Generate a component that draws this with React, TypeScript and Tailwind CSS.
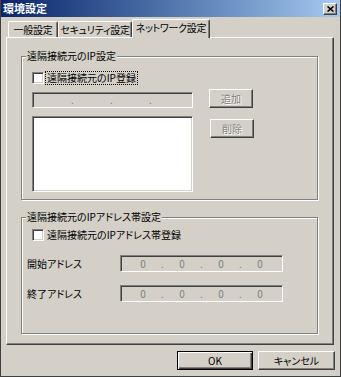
import type { ReactNode } from 'react'

const FONT = "font-['Noto_Sans_CJK_JP','Noto_Sans_CJK_SC',sans-serif]"

// classic 3D edges
const RAISED =
  'border-t border-l border-t-white border-l-white border-r border-b border-r-[#404040] border-b-[#404040] shadow-[inset_-1px_-1px_0_#808080]'
const SUNKEN =
  'border-t border-l border-t-[#808080] border-l-[#808080] border-r border-b border-r-white border-b-white shadow-[inset_1px_1px_0_#404040,inset_-1px_-1px_0_#d4d0c8]'

function TitleBar() {
  return (
    <div className="flex h-[17px] items-center justify-between bg-linear-to-r from-[#0a246a] to-[#a6caf0] pl-[2px] pr-[3px]">
      <span className="text-[11px] font-bold leading-[13px] text-white">環境設定</span>
      <button className={`flex h-[12px] w-[14px] items-center justify-center bg-[#d4d0c8] ${RAISED}`}>
        <svg width="7" height="6" viewBox="0 0 7 6" aria-hidden>
          <path d="M0.5 0.5 L6.5 5.5 M6.5 0.5 L0.5 5.5" stroke="#000" strokeWidth="1.6" />
        </svg>
      </button>
    </div>
  )
}

function Tab({ label, width, active }: { label: string; width: string; active?: boolean }) {
  if (active) {
    return (
      <div
        className={`flex h-[19px] items-center justify-center whitespace-nowrap rounded-t-[2px] bg-[#d4d0c8] pb-[2px] tracking-[-0.3px] border-t border-l border-t-white border-l-white border-r border-r-[#404040] shadow-[inset_-1px_0_0_#808080] ${width}`}
      >
        {label}
      </div>
    )
  }
  return (
    <div
      className={`mt-[2px] flex h-[16px] items-center justify-center whitespace-nowrap rounded-t-[2px] tracking-[-0.3px] border-t border-l border-t-white border-l-white border-r border-r-[#404040] shadow-[inset_-1px_0_0_#808080] ${width}`}
    >
      {label}
    </div>
  )
}

function Checkbox() {
  return <span className={`h-[12px] w-[12px] shrink-0 bg-white ${SUNKEN}`} />
}

function WinButton({ children, className, disabled }: { children: ReactNode; className?: string; disabled?: boolean }) {
  return (
    <button
      className={`flex h-[19px] items-center justify-center bg-[#d4d0c8] ${RAISED} ${
        disabled ? 'text-[#808080] [text-shadow:1px_1px_0_#fff]' : 'text-black'
      } ${className ?? ''}`}
    >
      {children}
    </button>
  )
}

function IpField({ width, zeros }: { width: string; zeros?: boolean }) {
  return (
    <div className={`flex h-[17px] items-center bg-[#d4d0c8] text-[#808080] ${SUNKEN} ${width} ${zeros ? 'pl-[5px]' : 'pl-[3px]'}`}>
      {[0, 1, 2, 3].map((i) => (
        <div key={i} className="flex">
          <span className="w-[34px] text-center">{zeros ? '0' : ''}</span>
          {i < 3 && <span className="w-[5px] text-center">.</span>}
        </div>
      ))}
    </div>
  )
}

function Group({ title, className, children }: { title: string; className: string; children: ReactNode }) {
  return (
    <div
      className={`relative ml-[14px] w-[297px] border border-[#808080] shadow-[1px_1px_0_#fff,inset_1px_1px_0_#fff] ${className}`}
    >
      <span className="absolute -top-[7px] left-[4px] bg-[#d4d0c8] px-[1px] leading-[12px]">{title}</span>
      {children}
    </div>
  )
}

export default function App() {
  return (
    <div
      className={`flex h-[377px] w-[341px] flex-col border-x border-b border-[#404040] bg-[#d4d0c8] text-[10px] leading-[12px] text-black [font-feature-settings:'palt'] ${FONT}`}
    >
      <TitleBar />

      <div className="relative z-10 mt-[2px] flex h-[19px] items-start pl-[7px]">
        <Tab label="一般設定" width="w-[50px]" />
        <Tab label="セキュリティ設定" width="w-[74px]" />
        <Tab label="ネットワーク設定" width="w-[78px]" active />
      </div>

      <div
        className={`-mt-[1px] ml-[5px] flex h-[308px] w-[328px] flex-col border-t border-l border-t-white border-l-white border-r border-b border-r-[#404040] border-b-[#404040] shadow-[inset_-1px_-1px_0_#808080]`}
      >
        <Group title="遠隔接続元のIP設定" className="mt-[18px] pl-[10px] pt-[14px] pb-[7px]">
          <div className="flex h-[14px] items-center">
            <Checkbox />
            <span className="ml-[1px] border border-dotted border-black px-[1px] leading-[12px]">
              遠隔接続元のIP登録
            </span>
          </div>
          <div className="mt-[4px] flex items-end">
            <IpField width="w-[161px] !h-[16px]" />
            <WinButton disabled className="ml-[16px] w-[44px]">
              追加
            </WinButton>
          </div>
          <div className="mt-[8px] flex items-start">
            <div className={`h-[76px] w-[161px] bg-white ${SUNKEN}`} />
            <WinButton disabled className="ml-[17px] mt-[3px] w-[44px]">
              削除
            </WinButton>
          </div>
        </Group>

        <Group title="遠隔接続元のIPアドレス帯設定" className="mt-[17px] pl-[5px] pt-[10px] pb-[31px]">
          <div className="ml-[5px] flex h-[14px] items-center">
            <Checkbox />
            <span className="ml-[3px]">遠隔接続元のIPアドレス帯登録</span>
          </div>
          <div className="mt-[13px] flex items-center">
            <span className="w-[93px]">開始アドレス</span>
            <IpField width="w-[163px]" zeros />
          </div>
          <div className="mt-[13px] flex items-center">
            <span className="w-[93px]">終了アドレス</span>
            <IpField width="w-[163px]" zeros />
          </div>
        </Group>
      </div>

      <div className="mt-[6px] flex justify-end gap-[5px] pr-[5px]">
        <button className="flex h-[19px] w-[76px] items-center justify-center border border-black bg-[#d4d0c8] shadow-[inset_1px_1px_0_#fff,inset_-1px_-1px_0_#404040,inset_-2px_-2px_0_#808080]">
          OK
        </button>
        <WinButton className="w-[77px]">キャンセル</WinButton>
      </div>
    </div>
  )
}
